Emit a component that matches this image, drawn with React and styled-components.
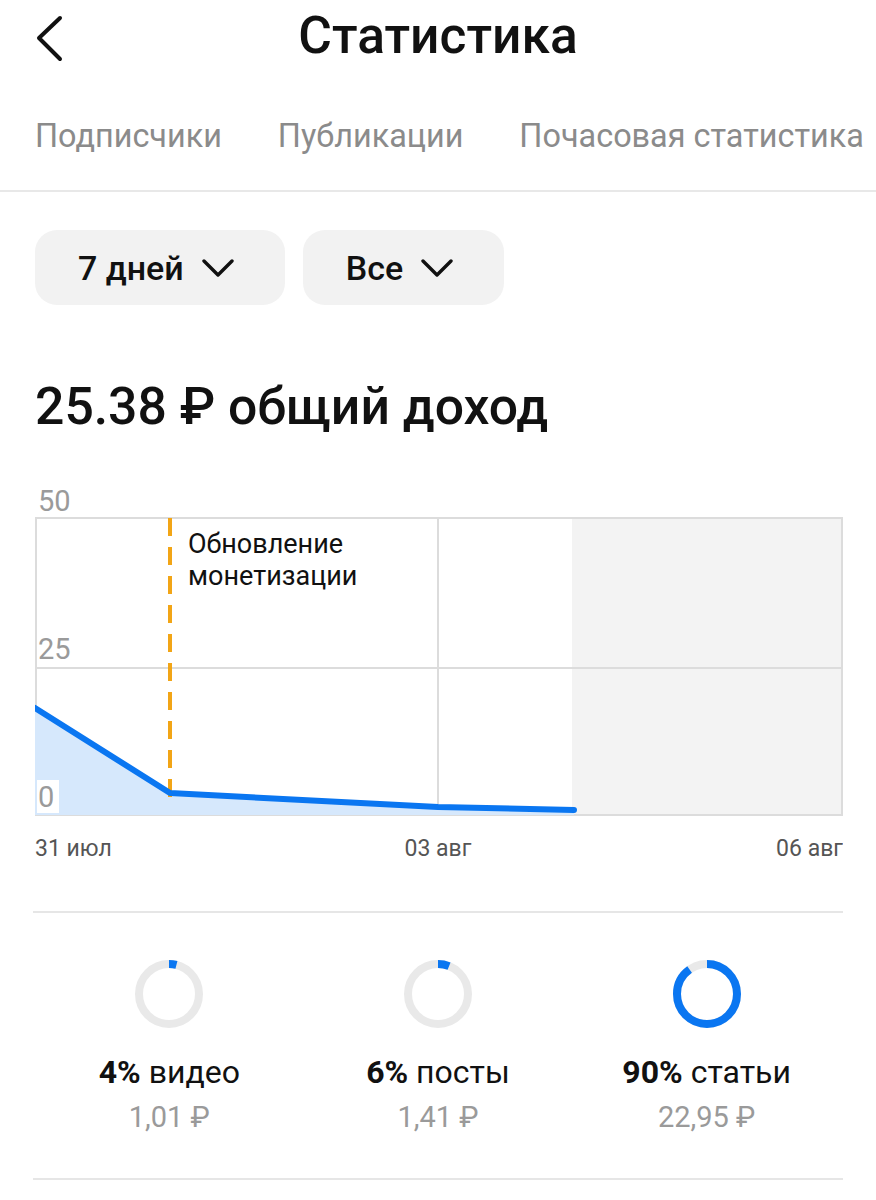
import React from 'react'
import styled, { createGlobalStyle } from 'styled-components'

const GlobalStyle = createGlobalStyle`
   * { box-sizing: border-box; }
   body {
      margin: 0;
      background: #fff;
      font-family: Roboto, 'Noto Sans', Arial, sans-serif;
      color: #111;
   }
`

const BLUE = '#0a76f1'

const Back = () => (
   <BackButton>
      <svg width="40" height="60" viewBox="0 0 40 60">
         <polyline points="26,4 5,24 26,45" fill="none" stroke="#111" strokeWidth="4" strokeLinecap="round" strokeLinejoin="round" />
      </svg>
   </BackButton>
)

const Chevron = () => (
   <svg width="32" height="20" viewBox="0 0 32 20">
      <polyline points="2,3 16,17 30,3" fill="none" stroke="#111" strokeWidth="3.4" strokeLinecap="round" strokeLinejoin="round" />
   </svg>
)

const Donut = ({ percent }) => {
   const r = 30
   const c = 2 * Math.PI * r
   return (
      <svg width="72" height="72" viewBox="0 0 72 72">
         <circle cx="36" cy="36" r={r} fill="none" stroke="#e9e9e9" strokeWidth="8" />
         <circle
            cx="36"
            cy="36"
            r={r}
            fill="none"
            stroke={BLUE}
            strokeWidth="8"
            strokeDasharray={`${(c * percent) / 100} ${c}`}
            transform="rotate(-90 36 36)"
         />
      </svg>
   )
}

const Chart = () => {
   const line = 'M0,228 L135,313 L403,327 L539,330'
   return (
      <ChartWrap>
         <svg width="808" height="390" viewBox="0 0 808 390">
            <rect x="537" y="38" width="271" height="297" fill="#f3f3f3" />
            <rect x="1" y="38" width="806" height="297" fill="none" stroke="#dcdcdc" strokeWidth="2" />
            <line x1="0" y1="188" x2="808" y2="188" stroke="#dcdcdc" strokeWidth="2" />
            <line x1="403" y1="38" x2="403" y2="335" stroke="#dcdcdc" strokeWidth="2" />
            <path d={`${line} L539,335 L0,335 Z`} fill="#d6e8fc" />
            <rect x="2" y="300" width="22" height="33" fill="#fff" />
            <text x="3" y="31" fontSize="29" fill="#9a9a9a">50</text>
            <text x="3" y="179" fontSize="29" fill="#9a9a9a">25</text>
            <text x="3" y="327" fontSize="29" fill="#9a9a9a">0</text>
            <line x1="135" y1="38" x2="135" y2="322" stroke="#f2a516" strokeWidth="4" strokeDasharray="18 11" />
            <path d={line} fill="none" stroke={BLUE} strokeWidth="6" strokeLinecap="round" strokeLinejoin="round" />
            <text x="153" y="73" fontSize="27" fill="#111">Обновление</text>
            <text x="153" y="105" fontSize="27" fill="#111">монетизации</text>
            <text x="0" y="376" fontSize="23" fill="#555">31 июл</text>
            <text x="403" y="376" fontSize="23" fill="#555" textAnchor="middle">03 авг</text>
            <text x="808" y="376" fontSize="23" fill="#555" textAnchor="end">06 авг</text>
         </svg>
      </ChartWrap>
   )
}

const stats = [
   { percent: 4, label: 'видео', value: '1,01 ₽' },
   { percent: 6, label: 'посты', value: '1,41 ₽' },
   { percent: 90, label: 'статьи', value: '22,95 ₽' },
]

const App = () => {
   const tabs = ['Подписчики', 'Публикации', 'Почасовая статистика']
   return (
      <>
         <GlobalStyle />
         <Page>
            <Header>
               <Back />
               <Title>Статистика</Title>
            </Header>
            <Tabs>
               {tabs.map((tab) => (
                  <Tab key={tab}>{tab}</Tab>
               ))}
            </Tabs>
            <Filters>
               <Filter>
                  7 дней
                  <Chevron />
               </Filter>
               <Filter>
                  Все
                  <Chevron />
               </Filter>
            </Filters>
            <Total>25.38 ₽ общий доход</Total>
            <Chart />
            <Divider />
            <Stats>
               {stats.map((s) => (
                  <Stat key={s.label}>
                     <Donut percent={s.percent} />
                     <StatLabel>
                        <b>{s.percent}%</b> {s.label}
                     </StatLabel>
                     <StatValue>{s.value}</StatValue>
                  </Stat>
               ))}
            </Stats>
            <Divider />
         </Page>
      </>
   )
}

const Page = styled.div`
   width: 876px;
   min-height: 1200px;
   overflow: hidden;
`
const Header = styled.div`
   position: relative;
   height: 72px;
   display: flex;
   justify-content: center;
   align-items: center;
`
const BackButton = styled.div`
   position: absolute;
   left: 34px;
   top: 14px;
   width: 40px;
   height: 60px;
`
const Title = styled.h1`
   margin: 0;
   font-size: 51.5px;
   font-weight: 500;
   line-height: 72px;
`
const Tabs = styled.div`
   height: 120px;
   display: flex;
   gap: 56px;
   padding: 44px 0 0 35px;
   border-bottom: 2px solid #e8e8e8;
   white-space: nowrap;
   overflow: hidden;
`
const Tab = styled.div`
   font-size: 32.4px;
   line-height: 40px;
   color: #8b8b8b;
`
const Filters = styled.div`
   display: flex;
   gap: 18px;
   padding: 38px 35px 0;
`
const Filter = styled.div`
   height: 75px;
   display: flex;
   align-items: center;
   gap: 18px;
   padding: 0 51px 0 43px;
   background: #f2f2f2;
   border-radius: 22px;
   font-size: 34px;
   font-weight: 500;
`
const Total = styled.h2`
   margin: 0;
   padding: 72px 35px 0;
   font-size: 51.7px;
   font-weight: 500;
   line-height: 60px;
   white-space: nowrap;
`
const ChartWrap = styled.div`
   padding: 43px 35px 0;
   svg {
      display: block;
      font-family: Roboto, Arial, sans-serif;
   }
`
const Divider = styled.div`
   margin: 41px 33px 0;
   height: 2px;
   background: #e6e6e6;
`
const Stats = styled.div`
   display: grid;
   grid-template-columns: repeat(3, 1fr);
   padding: 0 35px;
   margin-top: 45px;
   margin-bottom: 6px;
`
const Stat = styled.div`
   display: flex;
   flex-direction: column;
   align-items: center;
   svg {
      display: block;
   }
`
const StatLabel = styled.div`
   margin-top: 22px;
   font-size: 32px;
   line-height: 40px;
   b {
      font-weight: 700;
   }
`
const StatValue = styled.div`
   margin-top: 5px;
   font-size: 29px;
   line-height: 40px;
   color: #9a9a9a;
`

export default App
